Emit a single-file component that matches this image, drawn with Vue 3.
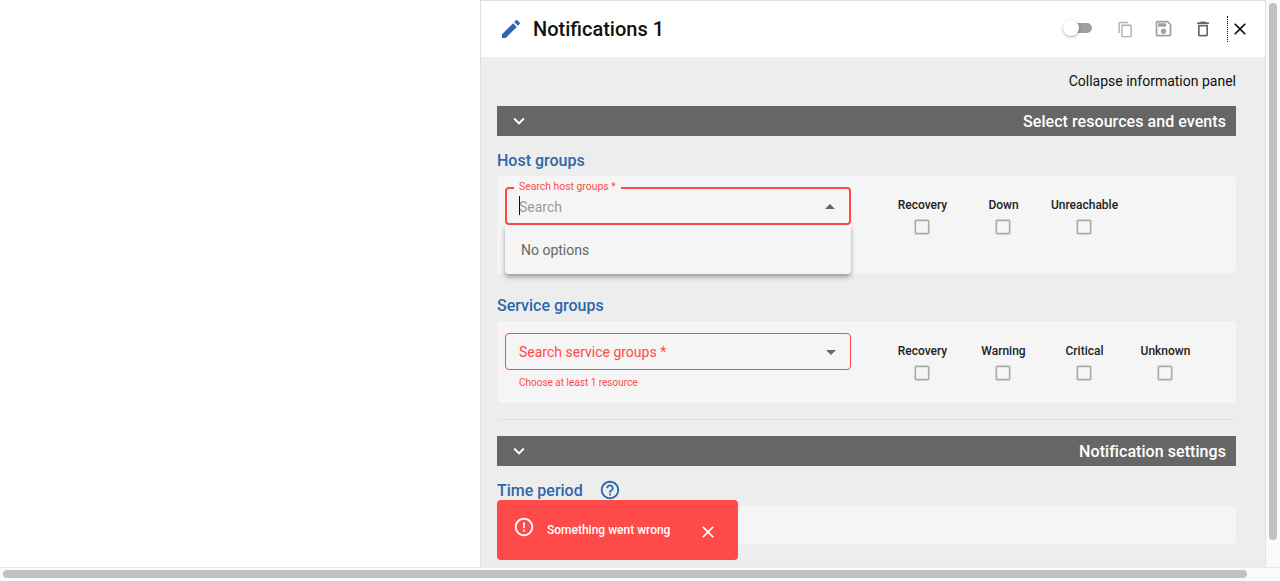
<template>
  <div class="page">
    <div class="left"></div>
    <div class="panel">
      <header class="panel-head">
        <svg class="pencil" viewBox="0 0 24 24" width="24" height="24"><path d="M3 17.25V21h3.75L17.81 9.94l-3.75-3.75L3 17.25zM20.71 7.04a1 1 0 0 0 0-1.41l-2.34-2.34a1 1 0 0 0-1.41 0l-1.83 1.83 3.75 3.75 1.83-1.83z" /></svg>
        <h1>Notifications 1</h1>
        <div class="actions">
          <span class="switch"><span class="track"></span><span class="thumb"></span></span>
          <svg class="act copy" viewBox="0 0 24 24" width="17" height="17"><path d="M16 1H4c-1.1 0-2 .9-2 2v14h2V3h12V1zm3 4H8c-1.1 0-2 .9-2 2v14c0 1.1.9 2 2 2h11c1.1 0 2-.9 2-2V7c0-1.1-.9-2-2-2zm0 16H8V7h11v14z" /></svg>
          <svg class="act save" viewBox="0 0 24 24" width="21" height="21"><path d="M17 3H5a2 2 0 0 0-2 2v14a2 2 0 0 0 2 2h14a2 2 0 0 0 2-2V7l-4-4zm2 16H5V5h11.17L19 7.83V19zm-7-7a3 3 0 1 0 0 6 3 3 0 0 0 0-6zM6 6h9v4H6V6z" /></svg>
          <svg class="act trash" viewBox="0 0 24 24" width="20" height="20"><path d="M6 19c0 1.1.9 2 2 2h8c1.1 0 2-.9 2-2V7H6v12zM8 9h8v10H8V9zm7.5-5-1-1h-5l-1 1H5v2h14V4h-3.5z" /></svg>
          <span class="sep"></span>
          <svg class="close" viewBox="0 0 24 24" width="20" height="20"><path d="M19 6.41 17.59 5 12 10.59 6.41 5 5 6.41 10.59 12 5 17.59 6.41 19 12 13.41 17.59 19 19 17.59 13.41 12z" /></svg>
        </div>
      </header>

      <div class="body">
        <div class="collapse-link">Collapse information panel</div>

        <div class="bar">
          <svg viewBox="0 0 24 24" width="22" height="22"><path d="M7.41 8.59 12 13.17l4.59-4.58L18 10l-6 6-6-6z" /></svg>
          <span>Select resources and events</span>
        </div>

        <h2 class="sub first">Host groups</h2>
        <div class="card host">
          <div class="field-col">
            <div class="field focused">
              <span class="float-label">Search host groups *</span>
              <span class="caret"></span>
              <span class="placeholder">Search</span>
              <span class="arrow up"></span>
            </div>
            <div class="menu">No options</div>
          </div>
          <div class="checks">
            <div v-for="c in hostChecks" :key="c" class="check">
              <span class="check-label">{{ c }}</span>
              <svg class="box" viewBox="0 0 24 24" width="20" height="20"><path d="M19 5v14H5V5h14m0-2H5c-1.1 0-2 .9-2 2v14c0 1.1.9 2 2 2h14c1.1 0 2-.9 2-2V5c0-1.1-.9-2-2-2z" /></svg>
            </div>
          </div>
        </div>

        <h2 class="sub second">Service groups</h2>
        <div class="card service">
          <div class="field-col">
            <div class="field error">
              <span class="err-label">Search service groups *</span>
              <span class="arrow"></span>
            </div>
            <div class="helper">Choose at least 1 resource</div>
          </div>
          <div class="checks">
            <div v-for="c in serviceChecks" :key="c" class="check">
              <span class="check-label">{{ c }}</span>
              <svg class="box" viewBox="0 0 24 24" width="20" height="20"><path d="M19 5v14H5V5h14m0-2H5c-1.1 0-2 .9-2 2v14c0 1.1.9 2 2 2h14c1.1 0 2-.9 2-2V5c0-1.1-.9-2-2-2z" /></svg>
            </div>
          </div>
        </div>

        <hr class="divider" />

        <div class="bar">
          <svg viewBox="0 0 24 24" width="22" height="22"><path d="M7.41 8.59 12 13.17l4.59-4.58L18 10l-6 6-6-6z" /></svg>
          <span>Notification settings</span>
        </div>

        <div class="time-head">
          <h2 class="sub">Time period</h2>
          <svg viewBox="0 0 24 24" width="22" height="22"><path d="M11 18h2v-2h-2v2zm1-16C6.48 2 2 6.48 2 12s4.48 10 10 10 10-4.48 10-10S17.52 2 12 2zm0 18c-4.41 0-8-3.59-8-8s3.59-8 8-8 8 3.59 8 8-3.59 8-8 8zm0-14c-2.21 0-4 1.79-4 4h2c0-1.1.9-2 2-2s2 .9 2 2c0 2-3 1.75-3 5h2c0-2.25 3-2.5 3-5 0-2.21-1.79-4-4-4z" /></svg>
        </div>
        <div class="card time"></div>
      </div>

      <div class="toast">
        <svg class="toast-icon" viewBox="0 0 24 24" width="22" height="22"><path d="M11 15h2v2h-2zm0-8h2v6h-2zm.99-5C6.47 2 2 6.48 2 12s4.47 10 9.99 10C17.52 22 22 17.52 22 12S17.52 2 11.99 2zM12 20c-4.42 0-8-3.58-8-8s3.58-8 8-8 8 3.58 8 8-3.58 8-8 8z" /></svg>
        <span class="toast-text">Something went wrong</span>
        <svg class="toast-close" viewBox="0 0 24 24" width="20" height="20"><path d="M19 6.41 17.59 5 12 10.59 6.41 5 5 6.41 10.59 12 5 17.59 6.41 19 12 13.41 17.59 19 19 17.59 13.41 12z" /></svg>
      </div>
    </div>

    <div class="scroll-v"><span></span></div>
    <div class="scroll-h"><span></span></div>
  </div>
</template>

<script setup>
const hostChecks = ['Recovery', 'Down', 'Unreachable']
const serviceChecks = ['Recovery', 'Warning', 'Critical', 'Unknown']
</script>

<style>
html, body { margin: 0; overflow: hidden; }
</style>

<style scoped>
.page {
  position: relative;
  display: flex;
  width: 1280px;
  height: 581px;
  overflow: hidden;
  background: #fff;
  font-family: Roboto, "Liberation Sans", sans-serif;
}
.left { width: 480px; flex: none; }

.panel {
  position: relative;
  width: 786px;
  height: 567px;
  flex: none;
  box-sizing: border-box;
  border: 1px solid #e0e0e0;
  border-bottom: 0;
  overflow: hidden;
  background: #ededed;
}
.panel-head {
  height: 56px;
  display: flex;
  align-items: center;
  background: #fff;
  padding-left: 18px;
}
.pencil { fill: #2e68aa; }
h1 {
  margin: 0 0 0 10px;
  font-size: 20px;
  font-weight: 500;
  color: #111;
}
.actions {
  margin-left: auto;
  display: flex;
  align-items: center;
  height: 100%;
}
.switch { position: relative; width: 30px; height: 20px; margin-right: 24px; }
.track {
  position: absolute;
  left: 10px; top: 4px;
  width: 19px; height: 10px;
  border-radius: 5px;
  background: #9e9e9e;
}
.thumb {
  position: absolute;
  left: 0; top: 1px;
  width: 16px; height: 16px;
  border-radius: 50%;
  background: #fff;
  box-shadow: 0 1px 3px rgba(0, 0, 0, .35);
}
.act { fill: #b0b0b0; }
.copy { margin-right: 19px; margin-top: 1px; }
.save { fill: #a0a0a0; margin-right: 19px; margin-top: -1px; }
.trash { fill: #666; margin-right: 14px; }
.sep { width: 0; height: 26px; border-left: 1px dotted #111; margin-right: 2px; }
.close { fill: #111; margin-right: 15px; }

.body { padding: 0 29px 0 16px; }
.collapse-link {
  height: 49px;
  line-height: 48px;
  text-align: right;
  font-size: 14px;
  color: #111;
}
.bar {
  height: 30px;
  display: flex;
  align-items: center;
  justify-content: space-between;
  background: #666;
  color: #fff;
  font-size: 16px;
  font-weight: 500;
  letter-spacing: .06px;
  padding: 0 10px 0 11px;
}
.bar svg { fill: #fff; }

.sub {
  margin: 0;
  font-size: 16px;
  font-weight: 500;
  color: #2e68aa;
  line-height: 20px;
}
.first { margin-top: 15px; margin-bottom: 5px; }
.second { margin-top: 22px; margin-bottom: 5px; }

.card {
  display: flex;
  background: #f5f5f5;
  border-radius: 4px;
  padding: 0 8px;
}
.card.host { height: 98px; padding-top: 11px; box-sizing: border-box; }
.card.service { height: 82px; padding-top: 12px; box-sizing: border-box; }
.card.time { height: 38px; }

.field-col { position: relative; width: 346px; flex: none; }
.field {
  position: relative;
  box-sizing: border-box;
  width: 346px;
  display: flex;
  align-items: center;
  padding-left: 13px;
  border-radius: 4px;
}
.focused { height: 38px; border: 2px solid #ff4a4a; padding-left: 12px; }
.error { height: 37px; border: 1px solid #ff4a4a; }
.float-label {
  position: absolute;
  left: 7px; top: -8px;
  padding: 0 5px;
  background: #f5f5f5;
  color: #ff4a4a;
  font-size: 10.4px;
  line-height: 12px;
}
.caret {
  position: absolute;
  left: 12px; top: 7px;
  width: 1px; height: 19px;
  background: #111;
}
.placeholder { font-size: 14px; color: #9a9a9a; padding-top: 2px; }
.err-label { font-size: 14px; color: #ff4a4a; }
.arrow {
  position: absolute;
  right: 14px; top: 50%;
  margin-top: -2px;
  border-left: 5px solid transparent;
  border-right: 5px solid transparent;
  border-top: 5px solid #666;
}
.arrow.up { border-top: 0; border-bottom: 5px solid #666; }
.menu {
  position: absolute;
  left: 0; top: 38px;
  width: 346px;
  height: 49px;
  box-sizing: border-box;
  padding-left: 16px;
  line-height: 51px;
  font-size: 14px;
  color: #666;
  background: #f5f5f5;
  border-radius: 0 0 4px 4px;
  box-shadow: 0 3px 5px rgba(0, 0, 0, .35);
}
.helper {
  margin-top: 7px;
  padding-left: 14px;
  font-size: 10px;
  line-height: 12px;
  color: #ff4a4a;
}

.checks { display: flex; margin-left: 31px; padding-top: 11px; }
.check {
  width: 81px;
  display: flex;
  flex-direction: column;
  align-items: center;
}
.check-label {
  font-size: 12px;
  font-weight: 500;
  line-height: 14px;
  color: #222;
}
.box {
  margin-top: 5px;
  margin-right: 1px;
  fill: #aaa;
}

.divider { border: 0; border-top: 1px solid #e0e0e0; margin: 16px 0; }
.time-head { display: flex; align-items: center; height: 22px; margin-top: 13px; margin-bottom: 5px; }
.time-head .sub { padding-top: 2px; }
.time-head svg { fill: #2e68aa; margin-left: 16px; }

.toast {
  position: absolute;
  left: 16px; top: 499px;
  width: 241px;
  height: 60px;
  display: flex;
  align-items: center;
  background: #ff4a4a;
  border-radius: 4px;
  color: #fff;
}
.toast-icon { fill: #fff; margin-left: 16px; margin-top: -7px; }
.toast-text { margin-left: 12px; font-size: 12px; font-weight: 500; }
.toast-close { fill: #fff; margin-left: 28px; margin-top: 3px; }

.scroll-v {
  position: absolute;
  right: 0; top: 0;
  width: 14px;
  height: 567px;
  background: #fafafa;
}
.scroll-v span {
  position: absolute;
  left: 3px; top: 3px;
  width: 8px;
  height: 537px;
  border-radius: 4px;
  background: #c1c1c1;
}
.scroll-h {
  position: absolute;
  left: 0; bottom: 0;
  width: 1280px;
  height: 14px;
  background: #fafafa;
  border-top: 1px solid #e8e8e8;
  box-sizing: border-box;
}
.scroll-h span {
  position: absolute;
  left: 3px; top: 2px;
  width: 1244px;
  height: 8px;
  border-radius: 4px;
  background: #c1c1c1;
}
</style>
